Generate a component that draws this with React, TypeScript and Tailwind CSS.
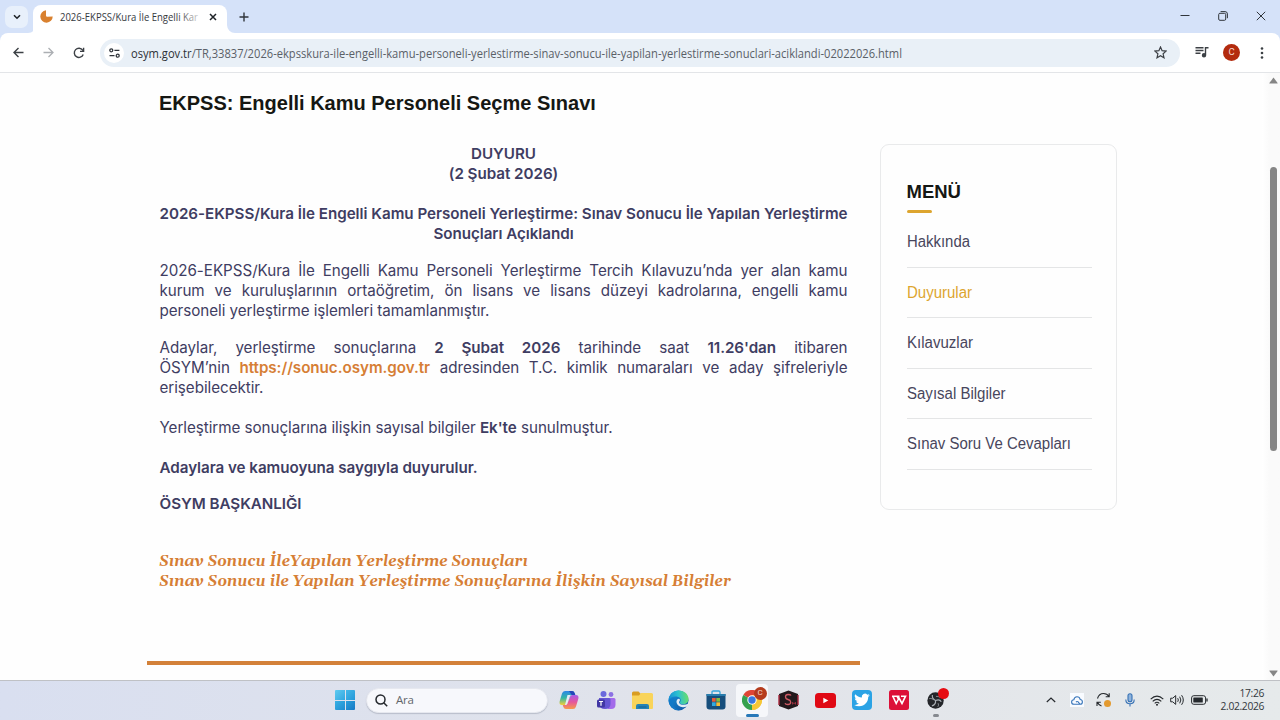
import type { ReactNode } from 'react'
import clsx from 'clsx'

const menuItems = [
  { label: 'Hakkında', width: 63 },
  { label: 'Duyurular', width: 65, active: true },
  { label: 'Kılavuzlar', width: 66 },
  { label: 'Sayısal Bilgiler', width: 98.5 },
  { label: 'Sınav Soru Ve Cevapları', width: 164 },
]

function TabStrip() {
  return (
    <div className="flex h-[33px] items-start bg-[#d5e2f9]">
      <div className="mt-[6px] ml-[5px] flex h-[22px] w-[23px] items-center justify-center rounded-[7px] bg-[#e8f0fb]">
        <svg width="8" height="6" viewBox="0 0 8 6" fill="none" stroke="#1f2328" strokeWidth="1.6">
          <path d="M1 1.2 4 4.2 7 1.2" />
        </svg>
      </div>

      {/* active tab with its rounded feet */}
      <svg className="mt-[25px]" width="8" height="8" viewBox="0 0 8 8">
        <path d="M8 0v8H0a8 8 0 0 0 8-8Z" fill="#fff" />
      </svg>
      <div className="mt-[5px] -ml-[3px] flex h-[28px] w-[194px] items-center rounded-t-[8px] bg-white pl-[7px]">
        <svg className="-mt-[5px]" width="13" height="13" viewBox="0 0 13 13">
          <path d="M6 .3A6.2 6.2 0 1 0 12.7 6.5L7.2 6.8Q6 6.8 6 5.5Z" fill="#d9812f" />
        </svg>
        <svg className="-mt-[4px] ml-[7px] overflow-visible" width="139" height="16">
          <defs>
            <linearGradient id="tab-fade" gradientUnits="userSpaceOnUse" x1="118" y1="0" x2="141" y2="0">
              <stop offset="0" stopColor="#33373c" />
              <stop offset="1" stopColor="#33373c" stopOpacity=".15" />
            </linearGradient>
          </defs>
          <text
            x="0"
            y="12"
            textLength="138"
            lengthAdjust="spacingAndGlyphs"
            fill="url(#tab-fade)"
            className="font-['Open_Sans',sans-serif] text-[10.5px]"
          >
            2026-EKPSS/Kura İle Engelli Kar
          </text>
        </svg>
        <svg className="-mt-[4px] ml-[10px]" width="8" height="8" viewBox="0 0 8 8" stroke="#1f2328" strokeWidth="1.5">
          <path d="m1 1 6 6M7 1 1 7" />
        </svg>
      </div>
      <svg className="mt-[25px]" width="8" height="8" viewBox="0 0 8 8">
        <path d="M0 0v8h8a8 8 0 0 1-8-8Z" fill="#fff" />
      </svg>
      <svg className="mt-[12px] ml-[4px]" width="10" height="10" viewBox="0 0 10 10" stroke="#30353b" strokeWidth="1.4">
        <path d="M5 .5v9M.5 5h9" />
      </svg>

      <div className="mt-[11px] mr-[14px] ml-auto flex items-center gap-[28px] text-[#30353b]">
        <svg width="10" height="10" viewBox="0 0 10 10" stroke="currentColor">
          <path d="M.5 4.5h9" />
        </svg>
        <svg width="10" height="10" viewBox="0 0 10 10" fill="none" stroke="currentColor">
          <rect x=".7" y="2.3" width="7" height="7" rx="1.2" />
          <path d="M2.6.6H7a2.4 2.4 0 0 1 2.4 2.4v4.2" />
        </svg>
        <svg width="10" height="10" viewBox="0 0 10 10" stroke="currentColor">
          <path d="m.8.8 8.4 8.4M9.2.8.8 9.2" />
        </svg>
      </div>
    </div>
  )
}

function Toolbar() {
  return (
    <div className="bg-[#d5e2f9]">
      <div className="flex h-[40px] items-center rounded-t-[8px] border-b border-[#e3e5e8] bg-white pl-[13px] text-[#3c4045]">
        <svg width="11" height="11" viewBox="0 0 11 11" fill="none" stroke="currentColor" strokeWidth="1.4">
          <path d="M10.5 5.5H1.2M5.5 1 1 5.5 5.5 10" />
        </svg>
        <svg className="ml-[19px] text-[#acafb3]" width="11" height="11" viewBox="0 0 11 11" fill="none" stroke="currentColor" strokeWidth="1.3">
          <path d="M.5 5.5h9.3M5.5 1 10 5.5 5.5 10" />
        </svg>
        <svg className="ml-[19px]" width="12" height="12" viewBox="0 0 12 12" fill="none" stroke="currentColor" strokeWidth="1.4">
          <path d="M10.2 7.5A4.6 4.6 0 1 1 9.7 3.2L10.5 4.2" />
          <path d="M10.6.8v3.6H7" />
        </svg>

        <div className="ml-[15px] flex h-[28px] w-[1080px] items-center rounded-full bg-[#e9f0f7] pl-[4px]">
          <span className="flex size-[20px] items-center justify-center rounded-full bg-white">
            <svg width="11" height="10" viewBox="0 0 11 10" fill="none" stroke="#2f343a" strokeWidth="1.3">
              <circle cx="2.3" cy="2.3" r="1.5" />
              <path d="M5.4 2.3h5M.5 7.7h5" />
              <circle cx="8.7" cy="7.7" r="1.5" />
            </svg>
          </span>
          <svg className="ml-[7px] overflow-visible" width="772" height="20">
            <text
              x="0"
              y="14.5"
              textLength="771"
              lengthAdjust="spacingAndGlyphs"
              className="fill-[#5a6067] font-['Open_Sans',sans-serif] text-[12px]"
            >
              <tspan className="fill-[#2d3136]">osym.gov.tr</tspan>
              /TR,33837/2026-ekpsskura-ile-engelli-kamu-personeli-yerlestirme-sinav-sonucu-ile-yapilan-yerlestirme-sonuclari-aciklandi-02022026.html
            </text>
          </svg>
          <svg className="mr-[13px] ml-auto" width="13" height="13" viewBox="0 0 13 13" fill="none" stroke="#3c4045" strokeWidth="1.2">
            <path d="m6.5 1 1.6 3.7 4 .4-3 2.7.9 4-3.5-2.1L3 11.8l.9-4-3-2.7 4-.4Z" />
          </svg>
        </div>

        <svg className="-mt-[2px] ml-[15px]" width="14" height="12" viewBox="0 0 14 12" stroke="currentColor" strokeWidth="1.4" fill="none">
          <path d="M.5 1.8h8M.5 4.5h8M.5 7.2h5M10.5 9.2V1.8h3" />
          <circle cx="9" cy="9.2" r="1.5" fill="currentColor" />
        </svg>
        <span className="ml-[14px] flex size-[17px] items-center justify-center rounded-full bg-[#b32b0e] font-['Roboto',sans-serif] text-[9.5px] text-[#f7d9d1]">
          C
        </span>
        <svg className="ml-[20px]" width="4" height="12" viewBox="0 0 4 12" fill="currentColor">
          <circle cx="2" cy="1.5" r="1.3" />
          <circle cx="2" cy="6" r="1.3" />
          <circle cx="2" cy="10.5" r="1.3" />
        </svg>
      </div>
    </div>
  )
}

function Line({ children, last }: { children: ReactNode; last?: boolean }) {
  return (
    <span className={clsx('block whitespace-nowrap', !last && '[text-align-last:justify]')}>
      {children}
    </span>
  )
}

function Announcement() {
  return (
    <div className="ml-[147px] w-[713px] pt-[18px]">
      <h1 className="ml-[12px] font-['Liberation_Sans',Arial,sans-serif] text-[20px] leading-[24px] font-bold whitespace-nowrap text-[#151713]">
        EKPSS: Engelli Kamu Personeli Seçme Sınavı
      </h1>

      <div className="mt-[29px] ml-[12.5px] h-[517px] w-[688px] font-['Inter',sans-serif] text-[15.2px] leading-[20px] tracking-[-0.04px] text-[#3f3d62]">
        <div className="text-center font-semibold">
          <p>DUYURU</p>
          <p>(2 Şubat 2026)</p>
          <p className="mt-[20px] whitespace-nowrap [text-align-last:justify]">
            2026-EKPSS/Kura İle Engelli Kamu Personeli Yerleştirme: Sınav Sonucu İle Yapılan Yerleştirme
          </p>
          <p>Sonuçları Açıklandı</p>
        </div>

        <p className="mt-[17px]">
          <Line>2026-EKPSS/Kura İle Engelli Kamu Personeli Yerleştirme Tercih Kılavuzu’nda yer alan kamu</Line>
          <Line>kurum ve kuruluşlarının ortaöğretim, ön lisans ve lisans düzeyi kadrolarına, engelli kamu</Line>
          <Line last>personeli yerleştirme işlemleri tamamlanmıştır.</Line>
        </p>

        <p className="mt-[16.5px]">
          <Line>
            Adaylar, yerleştirme sonuçlarına <b className="font-semibold">2 Şubat 2026</b> tarihinde saat{' '}
            <b className="font-semibold">11.26'dan</b> itibaren
          </Line>
          <Line>
            ÖSYM’nin <b className="font-semibold text-[#d67e35]">https://sonuc.osym.gov.tr</b> adresinden T.C. kimlik
            numaraları ve aday şifreleriyle
          </Line>
          <Line last>erişebilecektir.</Line>
        </p>

        <p className="mt-[20px]">
          Yerleştirme sonuçlarına ilişkin sayısal bilgiler <b className="font-semibold">Ek'te</b> sunulmuştur.
        </p>
        <p className="mt-[20px] font-semibold">Adaylara ve kamuoyuna saygıyla duyurulur.</p>
        <p className="mt-[16.5px] font-semibold">ÖSYM BAŞKANLIĞI</p>

        <svg className="mt-[37px] -ml-[1px] block overflow-visible" width="575" height="40">
          <g className="fill-[#d67e35] font-[Georgia,Gelasio,'Liberation_Serif',serif] text-[16.5px] font-bold tracking-normal italic">
            <text x="0" y="15" textLength="369" lengthAdjust="spacingAndGlyphs">
              Sınav Sonucu İleYapılan Yerleştirme Sonuçları
            </text>
            <text x="0" y="35" textLength="572" lengthAdjust="spacingAndGlyphs">
              Sınav Sonucu ile Yapılan Yerleştirme Sonuçlarına İlişkin Sayısal Bilgiler
            </text>
          </g>
        </svg>
      </div>

      <div className="h-[4px] bg-[#d38139]" />
    </div>
  )
}

function SideMenu() {
  return (
    <aside className="mt-[71px] ml-[20px] h-[366px] w-[237px] shrink-0 rounded-[9px] border border-[#e9eaeb] pt-[34px] pl-[25.5px] font-['Liberation_Sans',Arial,sans-serif]">
      <h2 className="text-[18.5px] leading-[26px] font-bold text-[#151713]">MENÜ</h2>
      <div className="mt-[5px] h-[3px] w-[25px] rounded-full bg-[#dda52f]" />
      <ul className="mt-[4px] w-[185px]">
        {menuItems.map((item) => (
          <li key={item.label} className="h-[50.5px] border-b border-[#e4e5e6] pt-[14px]">
            <svg className="block overflow-visible" width={item.width} height="20">
              <text
                x="0"
                y="15.5"
                textLength={item.width}
                lengthAdjust="spacingAndGlyphs"
                className={clsx('text-[16px]', item.active ? 'fill-[#dda52f]' : 'fill-[#48465c]')}
              >
                {item.label}
              </text>
            </svg>
          </li>
        ))}
      </ul>
    </aside>
  )
}

function Scrollbar() {
  return (
    <div className="ml-auto flex w-[18px] flex-col items-end bg-gradient-to-r from-white to-[#fafafa] to-40% pt-[4px] pr-[2px] pb-[3px]">
      <svg width="9" height="7" viewBox="0 0 9 7" fill="#858585">
        <path d="M4.5 .4 8.6 6Q8.8 6.6 8.2 6.6H.8Q.2 6.6 .4 6Z" />
      </svg>
      <div className="mt-[83px] mr-[1px] h-[284px] w-[7px] rounded-full bg-[#858585]" />
      <svg className="mt-auto" width="9" height="7" viewBox="0 0 9 7" fill="#858585">
        <path d="M4.5 6.6 .4 1Q.2 .4 .8 .4H8.2Q8.8 .4 8.6 1Z" />
      </svg>
    </div>
  )
}

function CopilotIcon() {
  return (
    <svg width="20" height="20" viewBox="0 0 20 20">
      <defs>
        <linearGradient id="cop-a" x1="0" y1="0" x2="0" y2="1">
          <stop offset="0" stopColor="#2c86e8" />
          <stop offset=".5" stopColor="#35b7a5" />
          <stop offset="1" stopColor="#f2cf37" />
        </linearGradient>
        <linearGradient id="cop-b" x1="0" y1="0" x2="0" y2="1">
          <stop offset="0" stopColor="#a65ee8" />
          <stop offset=".5" stopColor="#e5559d" />
          <stop offset="1" stopColor="#f79a4a" />
        </linearGradient>
      </defs>
      <path d="M6 1h7q2 0 2.6 2l.7 2h-3q-1.4 0-1.9 1.6L8.8 13Q8.2 15 6 15H3Q0 15 .6 11.5L3 3.5Q3.7 1 6 1Z" fill="url(#cop-a)" />
      <path d="M14 19H7q-2 0-2.6-2l-.7-2H6q2 0 2.6-2l2.6-6.4Q11.8 5 13.5 5H17q3 0 2.4 3.5L17 16.5Q16.3 19 14 19Z" fill="url(#cop-b)" />
      <path d="M8.5 5h3.6q-.8.3-1.2 1.6L8.6 13Q8.2 14.7 7 15H6Z" fill="#e4ebf5" />
      <path d="M10 1h3q2 0 2.6 2l.7 2h-3Q12 5 11.4 3Z" fill="#2446b8" />
    </svg>
  )
}

function TeamsIcon() {
  return (
    <svg width="20" height="20" viewBox="0 0 20 20">
      <circle cx="7.5" cy="4" r="3" fill="#6a69dc" />
      <circle cx="15" cy="4.5" r="2.4" fill="#8b70e3" />
      <path d="M12 8h6q1.5 0 1.5 1.5v5q0 4.5-4.5 4.5h-3Z" fill="#a36bea" />
      <path d="M3 8h10q1.5 0 1.5 1.5V14q0 5-5.5 5T3 14Z" fill="#6556d4" />
      <rect x="1" y="9.5" width="8" height="8" rx="1.5" fill="#4137a5" />
      <path d="M3 11.5h4M5 11.5v4.3" stroke="#fff" strokeWidth="1.2" />
    </svg>
  )
}

function FolderIcon() {
  return (
    <svg width="21" height="20" viewBox="0 0 21 20">
      <path d="M0 3q0-1.500 1.500-1.500h5L9 4h10.500Q21 4 21 5.500V8H0Z" fill="#d99d22" />
      <path d="M0 5.500h7L9 3h10.500Q21 3 21 4.500V18q0 1-1 1H1q-1 0-1-1Z" fill="#f9d45a" />
      <path d="M4 19v-3q0-2 2-2h9q2 0 2 2v3Z" fill="#2583b5" />
      <path d="M6.500 17h8" stroke="#155f8e" />
    </svg>
  )
}

function EdgeIcon() {
  return (
    <svg width="21" height="21" viewBox="0 0 21 21">
      <defs>
        <linearGradient id="edge-top" x1="0" y1=".5" x2="1" y2=".4">
          <stop offset="0" stopColor="#1690d6" />
          <stop offset=".5" stopColor="#2cc2d0" />
          <stop offset="1" stopColor="#6bdf66" />
        </linearGradient>
        <linearGradient id="edge-low" x1="0" y1="0" x2="1" y2="1">
          <stop offset="0" stopColor="#1698df" />
          <stop offset="1" stopColor="#12509f" />
        </linearGradient>
      </defs>
      <circle cx="10.5" cy="10.5" r="10" fill="url(#edge-low)" />
      <path d="M.5 10.5C1 4 5.5.5 10.5.5c6 0 10 4 10 8.5 0 3.5-2.6 5.3-5.4 5.3-2 0-3.4-.6-3.4-1.5 0-.6 1-1 1-2.8C12.7 7.5 10 6.5 7.5 6.5 4 6.5 1.3 8 .5 10.5Z" fill="url(#edge-top)" />
      <path d="M9.5 9.2c-2.3 2.3-.7 7.3 5.2 8 1.5.1 3-.3 4.3-1l1.5-2.6c-4 2.2-9.500 1.300-9.500-1.400 0-.8.900-1.200.900-2.300 0-1.300-1.400-1.700-2.400-.700Z" fill="#e3edf5" />
      <path d="M6.5 8.5C3 13 6 19.5 12 20.3 6 21 .8 16 .6 10.8c1-2 3.4-3.2 5.9-2.3Z" fill="#1279c8" />
    </svg>
  )
}

function StoreIcon() {
  return (
    <svg width="20" height="20" viewBox="0 0 20 20">
      <path d="M6 5V2.2Q6 1 7.2 1h5.6Q14 1 14 2.2V5" fill="none" stroke="#36a6db" strokeWidth="1.3" />
      <path d="M.5 4h19v12.5q0 3-3 3h-13q-3 0-3-3Z" fill="#174e7c" />
      <path d="M.5 4h19v2H.5Z" fill="#277cad" />
      <path d="M6 8h3.7v3.7H6Z" fill="#e95a38" />
      <path d="M10.3 8H14v3.7h-3.7Z" fill="#82bd40" />
      <path d="M6 12.3h3.7V16H6Z" fill="#32a9e0" />
      <path d="M10.3 12.3H14V16h-3.7Z" fill="#f5bd36" />
    </svg>
  )
}

function ChromeIcon() {
  return (
    <svg width="20" height="20" viewBox="0 0 20 20">
      <path d="M10 10 1.3 5A10 10 0 0 1 18.7 5Z" fill="#df4535" />
      <path d="M10 10 18.7 5A10 10 0 0 1 10 20Z" fill="#f6c737" />
      <path d="M10 10v10A10 10 0 0 1 1.3 5Z" fill="#35a14e" />
      <path d="M10 5.3h8.8A10 10 0 0 1 10 20l4-7.5Z" fill="#f6c737" />
      <circle cx="10" cy="10" r="4.7" fill="#fff" />
      <circle cx="10" cy="10" r="3.7" fill="#3a78df" />
    </svg>
  )
}

function StudioIcon() {
  return (
    <svg width="21" height="20" viewBox="0 0 21 20">
      <path d="M10.5.5 20 4v12l-9.5 3.5L1 16V4Z" fill="#22191c" />
      <path d="M1 5v10M20 5v10" stroke="#aa293e" strokeWidth="1.4" />
      <path d="M13 5.5Q12.5 4.5 10 4.5q-2.5 0-2.5 2.3Q7.5 9 10 9.5t2.7 2.5q0 2.5-2.7 2.5-2.5 0-3-1.3" fill="none" stroke="#ce5963" strokeWidth="1.3" />
      <path d="M14.5 14.5v-2.3l1.5 1.6 1.5-1.6v2.3" fill="none" stroke="#97303d" />
    </svg>
  )
}

function YoutubeIcon() {
  return (
    <svg width="21" height="15" viewBox="0 0 21 15">
      <rect width="21" height="15" rx="3.5" fill="#e00914" />
      <path d="m8.3 4.7 5 2.8-5 2.8Z" fill="#fff" />
    </svg>
  )
}

function TwitterIcon() {
  return (
    <svg width="20" height="20" viewBox="0 0 20 20">
      <rect width="20" height="20" rx="4" fill="#2ba3e5" />
      <path
        transform="translate(2.2 2.2) scale(.65)"
        d="M23.95 4.57a10 10 0 0 1-2.82.77 4.96 4.96 0 0 0 2.16-2.72c-.95.56-2 .97-3.13 1.19a4.92 4.92 0 0 0-8.38 4.48C7.69 8.09 4.07 6.13 1.64 3.16a4.92 4.92 0 0 0 1.52 6.57 4.9 4.9 0 0 1-2.23-.61v.06a4.92 4.92 0 0 0 3.95 4.83 5 5 0 0 1-2.21.08 4.94 4.94 0 0 0 4.6 3.42A9.87 9.87 0 0 1 0 19.54a14 14 0 0 0 7.55 2.21c9.05 0 14-7.5 14-13.98 0-.21 0-.42-.02-.63a9.9 9.9 0 0 0 2.42-2.57Z"
        fill="#fff"
      />
    </svg>
  )
}

function WpsIcon() {
  return (
    <svg width="20" height="20" viewBox="0 0 20 20">
      <rect width="20" height="20" rx="2.5" fill="#dc1038" />
      <path d="M3 6.2h7.5M3.800 6.2 7.2 13.5 10 8l3 5.500 3.500-7.300H12M8 6.2l1.500 3" fill="none" stroke="#fff" strokeWidth="1.6" />
    </svg>
  )
}

function ObsIcon() {
  return (
    <svg width="20" height="20" viewBox="0 0 22 22">
      <circle cx="10.5" cy="11.5" r="9" fill="#24262a" />
      <g fill="none" stroke="#a9aeb4" strokeWidth="1.3">
        <path d="M7 5.5q-.5 4.5 3.5 6M10.5 11.5q4.5-2 6.3 1.5M10.5 11.5q.5 4.5-4 6" />
        <path d="M3.5 9.5q2-1 4 .8M13 18.5q1.5-1.5.3-4M11 7q3-.5 4 1.5" strokeWidth=".8" />
      </g>
    </svg>
  )
}

function Slot({ children }: { children: ReactNode }) {
  return <div className="relative flex h-[39px] w-[36.7px] shrink-0 items-center justify-center">{children}</div>
}

function Tray() {
  return (
    <div className="mr-[16px] ml-auto flex items-center text-[#25292d]">
      <svg width="10" height="6" viewBox="0 0 10 6" fill="none" stroke="currentColor" strokeWidth="1.2">
        <path d="M.8 5 5 1l4.2 4" />
      </svg>
      <span className="ml-[14px] flex size-[14px] items-center justify-center bg-[#f8fbff]">
        <svg width="12" height="9" viewBox="0 0 12 9" fill="none" stroke="#3976ba" strokeWidth="1.1">
          <path d="M9 8.300H3Q.6 8.300.6 6q0-2 2.200-2.200Q3.300.7 6 .7q2.600 0 3.200 2.800 2.200.2 2.200 2.500 0 2.300-2.400 2.300L7.200 5.900Q6 4.900 5 6.200" />
        </svg>
      </span>
      <span className="relative ml-[12px] block h-[16px] w-[15px]">
        <svg width="15" height="16" viewBox="0 0 15 16" fill="none" stroke="currentColor" strokeWidth="1.1">
          <path d="M1.5 6.5Q3 1.5 7.5 1.500q3.500 0 5.500 3M13.200 1.200v3.500H9.700M5.500 14q-3-1-4-3.700M1 14v-3.800h3.800" />
        </svg>
        <span className="absolute right-0 bottom-[1px] size-[7px] rounded-full bg-[#e39a2f]" />
      </span>
      <svg className="ml-[14px]" width="10" height="14" viewBox="0 0 10 14" fill="none" stroke="#3671b5" strokeWidth="1.1">
        <rect x="3" y=".7" width="4" height="8" rx="2" fill="#8eb3dc" />
        <path d="M.8 6.5q0 4.3 4.200 4.300t4.200-4.300M5 11v2.500" />
      </svg>
      <svg className="ml-[15px]" width="14" height="11" viewBox="0 0 14 11" fill="none" stroke="currentColor" strokeWidth="1.1">
        <path d="M.7 4.200q6.300-6 12.600 0M2.700 6.300q4.300-4 8.600 0M4.700 8.300q2.300-2 4.600 0" />
        <circle cx="7" cy="9.7" r="1" fill="currentColor" stroke="none" />
      </svg>
      <svg className="ml-[6px]" width="14" height="12" viewBox="0 0 14 12" fill="none" stroke="currentColor">
        <path d="M.7 4.200v3.600h2l3 2.600V1.600l-3 2.600ZM7.700 4.200q1.300 1.800 0 3.600M9.700 2.700q2.300 3.300 0 6.600M11.600 1.200q3.400 4.800 0 9.600" />
      </svg>
      <svg className="ml-[7px]" width="17" height="10" viewBox="0 0 17 10" fill="none" stroke="currentColor">
        <rect x=".6" y=".7" width="14" height="8.6" rx="2.2" />
        <rect x="2.3" y="2.4" width="9.5" height="5.2" rx=".6" fill="currentColor" stroke="none" />
        <path d="M16 3.500v3" strokeWidth="1.3" />
      </svg>
      <div className="ml-[12px] w-[44px] text-right font-['Open_Sans',sans-serif] text-[10.3px] leading-[13px] tracking-[-0.35px] whitespace-nowrap text-[#33383c]">
        <p>17:26</p>
        <p>2.02.2026</p>
      </div>
    </div>
  )
}

function Taskbar() {
  return (
    <div className="flex h-[40px] items-center border-t border-[#bfc1c5] bg-gradient-to-r from-[#d9dff0] via-[#e2e4ea] via-60% to-[#e6eaeb] pb-[1px]">
      {/* start button */}
      <div className="ml-[335px] grid size-[20px] grid-cols-2 gap-[1px]">
        <span className="rounded-tl-[1px] bg-gradient-to-br from-[#5ecbf0] to-[#2fa6e0]" />
        <span className="rounded-tr-[1px] bg-gradient-to-br from-[#43b8e8] to-[#2397d8]" />
        <span className="rounded-bl-[1px] bg-gradient-to-br from-[#37b1e5] to-[#1e8bd0]" />
        <span className="rounded-br-[1px] bg-gradient-to-br from-[#2a9fdb] to-[#1678c4]" />
      </div>

      <div className="ml-[11px] flex h-[25px] w-[182px] items-center rounded-full border border-[#e6e8ef] bg-[#f7f8fc] pl-[8px] shadow-[0_1px_1px_#b9becb]">
        <svg width="13" height="13" viewBox="0 0 13 13" fill="none" stroke="#24282d" strokeWidth="1.5">
          <circle cx="5.5" cy="5.5" r="4.5" />
          <path d="m8.7 8.7 3.5 3.5" />
        </svg>
        <span className="ml-[8px] font-['Open_Sans',sans-serif] text-[11.5px] leading-[16px] tracking-[-0.2px] text-[#62666b]">Ara</span>
      </div>

      <div className="ml-[2.5px] flex">
        <Slot><CopilotIcon /></Slot>
        <Slot><TeamsIcon /></Slot>
        <Slot><FolderIcon /></Slot>
        <Slot><EdgeIcon /></Slot>
        <Slot><StoreIcon /></Slot>
        <Slot>
          <div className="flex h-[33px] w-[32px] items-center justify-center rounded-[4px] bg-[#f6f7fa]">
            <ChromeIcon />
          </div>
          <span className="absolute top-[6px] right-[4px] flex size-[13px] items-center justify-center rounded-full bg-[#b53b1d] font-['Roboto',sans-serif] text-[8px] text-[#f3d6cd]">
            C
          </span>
          <span className="absolute bottom-[3px] h-[3px] w-[13px] rounded-full bg-[#2878b8]" />
        </Slot>
        <Slot><StudioIcon /></Slot>
        <Slot><YoutubeIcon /></Slot>
        <Slot><TwitterIcon /></Slot>
        <Slot><WpsIcon /></Slot>
        <Slot>
          <ObsIcon />
          <span className="absolute top-[7px] right-[5px] size-[11px] rounded-full bg-[#e60c12]" />
          <span className="absolute bottom-[3px] h-[3px] w-[6px] rounded-full bg-[#85898f]" />
        </Slot>
      </div>

      <Tray />
    </div>
  )
}

export default function App() {
  return (
    <div className="flex h-[720px] w-[1280px] flex-col overflow-hidden bg-white">
      <TabStrip />
      <Toolbar />
      <main className="flex h-[607px] overflow-hidden bg-[#fefefe]">
        <Announcement />
        <SideMenu />
        <Scrollbar />
      </main>
      <Taskbar />
    </div>
  )
}
